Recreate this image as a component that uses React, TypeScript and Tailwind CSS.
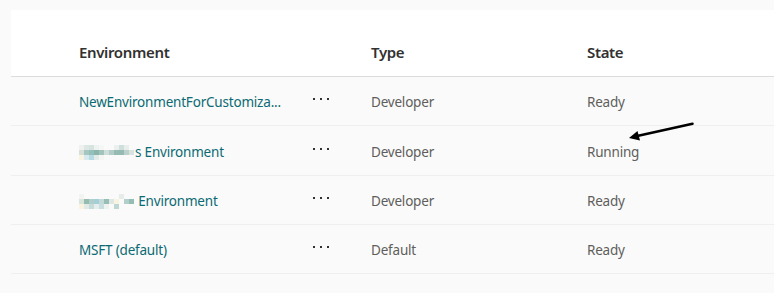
import React from "react";

type Env = {
  name: string;
  masked?: string[][];
  suffix?: string;
  type: string;
  state: string;
  tall?: boolean;
};

const maskA = [
  ["#eef1ee", "#dce7e3", "#d5e4e1", "#eef2f0", "#f5f7f5", "#fafafa", "#fafafa", "#eaf0ed", "#cfe0dc", "#e8eeeb", "#fafafa"],
  ["#d6e0d8", "#a6c7bf", "#94bfbb", "#8ab5ad", "#a2c4bb", "#cfdeda", "#b2ccc7", "#97bbb3", "#95bab2", "#bcd1cc", "#d8e3df"],
  ["#f9f4e2", "#d9eaee", "#b6dbe4", "#e2ebe8", "#f3f6f3", "#fafafa", "#fafafa", "#fafafa", "#fafafa", "#fafafa", "#fafafa"],
];

const maskB = [
  ["#f2f4f1", "#fafafa", "#fafafa", "#fafafa", "#fafafa", "#fafafa", "#fafafa", "#fafafa", "#e8ece8", "#fafafa", "#fafafa"],
  ["#d8e6dc", "#96bbb0", "#b0cfc9", "#a2cfd9", "#c2dbd6", "#97bdb4", "#dde8e5", "#f9f4e0", "#fafafa", "#b3cfcb", "#96bdb4"],
  ["#f9f3e0", "#e0ebe8", "#c6dcdb", "#e6eeeb", "#c8dfe1", "#eef3f0", "#fafafa", "#bdd8d2", "#fafafa", "#fafafa", "#fafafa"],
];

const rows: Env[] = [
  { name: "NewEnvironmentForCustomiza...", type: "Developer", state: "Ready" },
  { name: "", masked: maskA, suffix: "s Environment", type: "Developer", state: "Running", tall: true },
  { name: "", masked: maskB, suffix: " Environment", type: "Developer", state: "Ready" },
  { name: "MSFT (default)", type: "Default", state: "Ready" },
];

function Mosaic({ cells }: { cells: string[][] }) {
  return (
    <div className="flex flex-col">
      {cells.map((line, i) => (
        <div key={i} className="flex">
          {line.map((c, j) => (
            <div key={j} className="w-[5px] h-[5px]" style={{ backgroundColor: c }} />
          ))}
        </div>
      ))}
    </div>
  );
}

function MoreDots() {
  return (
    <div className="flex items-center gap-[5px] pl-[12px] -mt-[7px]">
      <span className="w-[2px] h-[2px] bg-[#323130]" />
      <span className="w-[2px] h-[2px] bg-[#323130]" />
      <span className="w-[2px] h-[2px] bg-[#323130]" />
    </div>
  );
}

export default function App() {
  return (
    <div
      className="relative w-[774px] h-[293px] overflow-hidden bg-[#fafafa] pt-[10px] pl-[11px]"
      style={{ fontFamily: '"Segoe UI", "Noto Sans", sans-serif' }}
    >
      {/* Header */}
      <div className="grid grid-cols-[222px_70px_216px_1fr] pl-[68px] h-[67px] items-end pb-[13px] bg-white border-b border-[#dcdcdc] text-[15px] tracking-[-0.35px] font-semibold text-[#323130]">
        <div>Environment</div>
        <div />
        <div>Type</div>
        <div>State</div>
      </div>

      {/* Rows */}
      {rows.map((r, i) => (
        <div
          key={i}
          className={`grid grid-cols-[222px_70px_216px_1fr] pl-[68px] pt-[3px] items-center border-b border-[#efefef] text-[13.5px] tracking-[-0.2px] ${
            r.tall ? "h-[50px]" : "h-[49px]"
          }`}
        >
          <div className="flex items-center text-[#0b6a73]">
            {r.masked ? (
              <>
                <Mosaic cells={r.masked} />
                <span className="ml-[1px] whitespace-pre">{r.suffix}</span>
              </>
            ) : (
              <span>{r.name}</span>
            )}
          </div>
          <MoreDots />
          <div className="text-[#605e5c]">{r.type}</div>
          <div className="text-[#605e5c]">{r.state}</div>
        </div>
      ))}

      {/* Annotation arrow */}
      <svg className="absolute left-0 top-0 pointer-events-none" width="774" height="293">
        <line x1="692.5" y1="123.8" x2="636" y2="136.3" stroke="#000" strokeWidth="2.6" strokeLinecap="round" />
        <polygon points="629,138 637.5,131 640,140.5" fill="#000" />
      </svg>
    </div>
  );
}
